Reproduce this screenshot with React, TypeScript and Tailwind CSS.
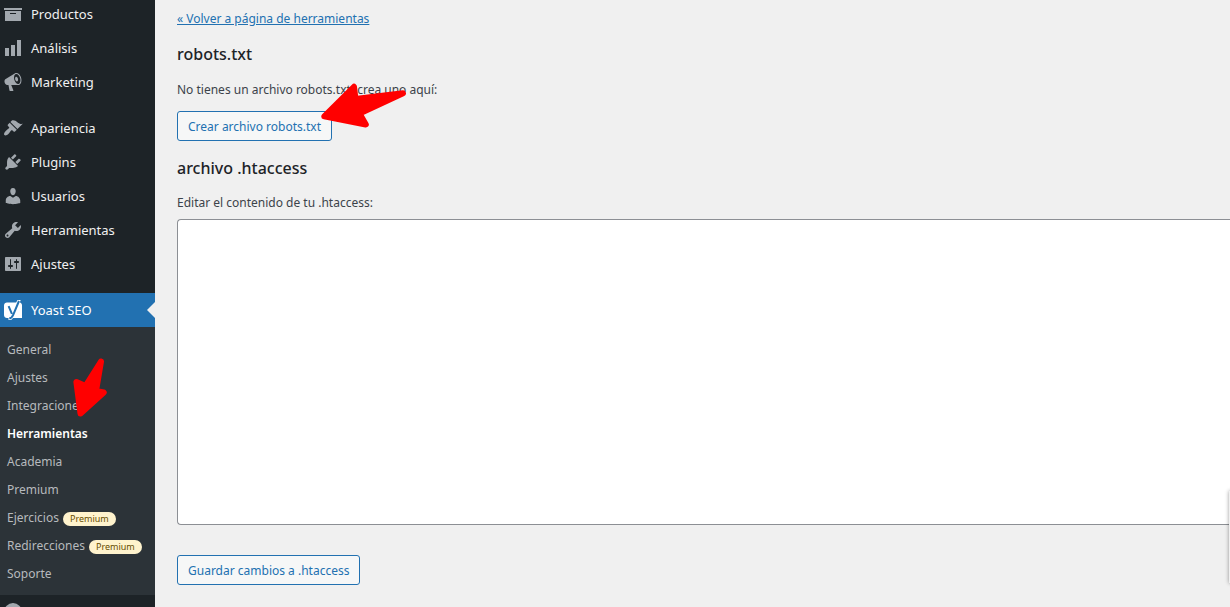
import { useState } from "react";
import clsx from "clsx";

interface MenuEntry {
  label: string;
  icon: string;
}

const storeMenu: MenuEntry[] = [
  { label: "Productos", icon: "M19 4v2H1V4h18zM2 7h16v10H2V7zm11 3V9H7v1h6z" },
  { label: "Análisis", icon: "M18 18V2h-4v16h4zm-6 0V7H8v11h4zm-6 0v-8H2v8h4z" },
  {
    label: "Marketing",
    icon: "M18.15 5.94c.46 1.62.38 3.22-.02 4.48-.42 1.28-1.26 2.18-2.3 2.48-.16.06-.26.06-.4.06-.06.02-.12.02-.18.02-.06.02-.14.02-.22.02h-6.8l2.22 5.5c.02.14-.06.26-.14.34-.08.1-.24.16-.34.16H6.95c-.1 0-.26-.06-.34-.16-.08-.08-.16-.2-.14-.34l-1-5.5H4.25l-.02-.02c-.5.06-1.08-.18-1.54-.62s-.88-1.08-1.06-1.88c-.24-.8-.2-1.56-.02-2.2.18-.62.58-1.08 1.06-1.3l.02-.02 9-5.4c.1-.06.18-.1.24-.16.06-.04.14-.08.24-.12.16-.08.28-.12.5-.18 1.04-.3 2.24.1 3.22.98s1.84 2.24 2.26 3.86zm-2.58 5.98h-.02c.4-.1.74-.34 1.04-.7.58-.7.86-1.76.86-3.04 0-.64-.1-1.3-.28-1.98-.34-1.36-1.02-2.5-1.78-3.24s-1.68-1.1-2.46-.88c-.82.22-1.4.96-1.7 2-.32 1.04-.28 2.36.06 3.72.38 1.36 1 2.5 1.8 3.24.78.74 1.62 1.1 2.48.88zm-2.54-7.08c.22-.04.42-.02.62.04.38.16.76.48 1.02 1s.42 1.2.42 1.78c0 .3-.04.56-.12.8-.18.48-.44.84-.86.94-.34.1-.8-.06-1.14-.4s-.64-.86-.78-1.5c-.18-.62-.12-1.24.02-1.72s.48-.84.82-.94z",
  },
];

const adminMenu: MenuEntry[] = [
  {
    label: "Apariencia",
    icon: "M14.48 11.06L7.41 3.99l1.5-1.5c.5-.56 2.3-.47 3.51.32 1.21.8 1.43 1.28 2.91 2.1 1.18.64 2.45 1.26 4.45.85zm-.71.71L6.7 4.7 4.93 6.47c-.39.39-.39 1.02 0 1.41l1.06 1.06c.39.39.39 1.03 0 1.42-.6.6-1.43 1.11-2.21 1.69-.35.26-.7.53-1.01.84C1.43 14.23.4 16.08 1.4 17.07c.99 1 2.84-.03 4.18-1.36.31-.31.58-.66.85-1.02.57-.78 1.08-1.61 1.69-2.21.39-.39 1.02-.39 1.41 0l1.06 1.06c.39.39 1.02.39 1.41 0z",
  },
  {
    label: "Plugins",
    icon: "M13.11 4.36L9.87 7.6 8 5.73l3.24-3.24c.35-.34 1.05-.2 1.56.32.52.51.66 1.21.31 1.55zm-8 1.77l.91-1.12 9.01 9.01-1.19.84c-.71.71-2.63 1.16-3.82 1.16H6.14L4.9 17.26c-.59.59-1.54.59-2.12 0-.59-.58-.59-1.53 0-2.12l1.24-1.24v-3.88c0-1.13.4-3.19 1.09-3.89zm7.26 3.97l3.24-3.24c.34-.35 1.04-.21 1.55.31.52.51.66 1.21.31 1.55l-3.24 3.25z",
  },
  {
    label: "Usuarios",
    icon: "M10 9.25c-2.27 0-2.73-3.44-2.73-3.44C7 4.02 7.82 2 9.97 2c2.16 0 2.98 2.02 2.71 3.81 0 0-.41 3.44-2.68 3.44zm0 2.57L12.72 10c2.39 0 4.52 2.33 4.52 4.53v2.49s-3.65 1.13-7.24 1.13c-3.65 0-7.24-1.13-7.24-1.13v-2.49c0-2.25 1.94-4.48 4.47-4.48z",
  },
  {
    label: "Herramientas",
    icon: "M16.68 9.77c-1.34 1.34-3.3 1.67-4.95.99l-5.41 6.52c-.99.99-2.59.99-3.58 0s-.99-2.59 0-3.57l6.52-5.42c-.68-1.65-.35-3.61.99-4.95 1.28-1.28 3.12-1.62 4.72-1.06l-2.89 2.89 2.82 2.82 2.86-2.87c.53 1.58.18 3.39-1.08 4.65zM3.81 16.21c.4.39 1.04.39 1.43 0 .4-.4.4-1.04 0-1.43-.39-.4-1.03-.4-1.43 0-.39.39-.39 1.03 0 1.43z",
  },
  {
    label: "Ajustes",
    icon: "M18 16V4c0-.55-.45-1-1-1H3c-.55 0-1 .45-1 1v12c0 .55.45 1 1 1h14c.55 0 1-.45 1-1zM8 11h1c.55 0 1 .45 1 1s-.45 1-1 1H8v1.5c0 .28-.22.5-.5.5s-.5-.22-.5-.5V13H6c-.55 0-1-.45-1-1s.45-1 1-1h1V5.5c0-.28.22-.5.5-.5s.5.22.5.5V11zm5-2h-1c-.55 0-1-.45-1-1s.45-1 1-1h1V5.5c0-.28.22-.5.5-.5s.5.22.5.5V7h1c.55 0 1 .45 1 1s-.45 1-1 1h-1v5.5c0 .28-.22.5-.5.5s-.5-.22-.5-.5V9z",
  },
];

const yoastMenu = [
  { label: "General" },
  { label: "Ajustes" },
  { label: "Integraciones" },
  { label: "Herramientas", current: true },
  { label: "Academia" },
  { label: "Premium" },
  { label: "Ejercicios", premium: true },
  { label: "Redirecciones", premium: true },
  { label: "Soporte" },
];

function MenuList({ items }: { items: MenuEntry[] }) {
  return (
    <ul>
      {items.map((item) => (
        <li key={item.label}>
          <a
            href="#"
            className="flex h-[34px] items-center gap-2 pl-[3px] text-[13px] text-[#f0f0f1]"
          >
            <svg viewBox="0 0 20 20" className="size-5 shrink-0 fill-[#a2a8ae]" aria-hidden="true">
              <path d={item.icon} />
            </svg>
            {item.label}
          </a>
        </li>
      ))}
    </ul>
  );
}

function YoastIcon() {
  return (
    <svg viewBox="0 0 20 20" className="size-5 shrink-0 overflow-visible" aria-hidden="true">
      <path
        d="M4 2.500h9.200L14.500 0h3.200l-.9 2.600c1.300.3 2.200 1.300 2.200 2.600V18H10l-1.500 1.700-3 .3v-2H4c-1.600 0-3-1.300-3-3V5.500c0-1.700 1.400-3 3-3z"
        fill="#fff"
      />
      <path
        d="M5.600 6.200l3.300 7.600M16 1L10.200 14.800c-.8 2-1.900 3.200-3.900 3.500"
        fill="none"
        stroke="#2271b1"
        strokeWidth="2"
      />
    </svg>
  );
}

function PremiumBadge() {
  return (
    <span className="mt-px flex h-3.5 items-center rounded-full bg-[#fff3cd] px-[7px] text-[9px] text-[#674e00]">
      Premium
    </span>
  );
}

function Sidebar() {
  return (
    <nav aria-label="Menú principal" className="relative w-[155px] shrink-0 bg-[#1d2327]">
      <div className="-mt-[3px] flex flex-col gap-3">
        <MenuList items={storeMenu} />
        <MenuList items={adminMenu} />
        <div>
          <a
            href="#"
            className="relative flex h-[34px] items-center gap-2 bg-[#2271b1] pl-[3px] text-[13px] text-white"
          >
            <YoastIcon />
            Yoast SEO
            <span className="absolute right-0 top-[9px] border-y-8 border-r-8 border-y-transparent border-r-[#f0f0f0]" />
          </a>
          <ul className="bg-[#2c3338] pb-[7px] pt-[9px]">
            {yoastMenu.map((item) => (
              <li key={item.label}>
                <a
                  href="#"
                  className={clsx(
                    "flex h-7 items-center gap-1 pl-[7px] text-xs",
                    item.current ? "font-semibold text-white" : "text-[#b7babd] hover:text-[#72aee6]"
                  )}
                >
                  {item.label}
                  {item.premium && <PremiumBadge />}
                </a>
              </li>
            ))}
          </ul>
          <div className="pl-[3px] pt-[7px]">
            <svg viewBox="0 0 20 20" className="size-5" aria-hidden="true">
              <circle cx="10" cy="10" r="7" fill="none" stroke="#a2a8ae" strokeWidth="4" />
            </svg>
          </div>
        </div>
      </div>
      <svg viewBox="0 0 34 60" className="absolute left-[73px] top-[357px] w-[34px]" aria-hidden="true">
        <path
          d="M28 4.500L12.500 29 3.400 25 7.500 56.500 30.700 35.500 23 34z"
          fill="red"
          stroke="red"
          strokeWidth="6"
          strokeLinejoin="round"
        />
      </svg>
    </nav>
  );
}

function SectionTitle({ children }: { children: React.ReactNode }) {
  return <h2 className="text-base/5 font-medium text-[#1d2327]">{children}</h2>;
}

function ActionButton({ children }: { children: React.ReactNode }) {
  return (
    <button
      type="button"
      className="flex h-[30px] items-center rounded-[3px] border border-[#2271b1] bg-[#f6f7f7] px-2.5 pt-0.5 text-xs text-[#2271b1] hover:bg-[#f0f0f1]"
    >
      {children}
    </button>
  );
}

export default function App() {
  const [htaccess, setHtaccess] = useState("");

  return (
    <div className="relative flex h-screen overflow-hidden bg-[#f0f0f0] font-['Segoe_UI','Noto_Sans',sans-serif] text-xs/5 text-[#3c434a]">
      <Sidebar />
      <main className="flex min-w-0 flex-1 flex-col items-start pl-[22px] pt-[9px]">
        <a href="#" className="mb-[15px] text-[#2271b1] underline">
          « Volver a página de herramientas
        </a>
        <SectionTitle>robots.txt</SectionTitle>
        <p className="mt-4">No tienes un archivo robots.txt, crea uno aquí:</p>
        <div className="relative mb-[17px] mt-[11px]">
          <ActionButton>Crear archivo robots.txt</ActionButton>
          <svg viewBox="0 0 88 48" className="absolute -top-7 left-[142px] w-[88px]" aria-hidden="true">
            <path
              d="M5.300 33.300L35 3.800 36.500 16 84 10.300 40.500 30.500 46.800 41.500z"
              fill="red"
              stroke="red"
              strokeWidth="6"
              strokeLinejoin="round"
            />
          </svg>
        </div>
        <SectionTitle>archivo .htaccess</SectionTitle>
        <label htmlFor="htaccess" className="mt-[15px]">
          Editar el contenido de tu .htaccess:
        </label>
        <textarea
          id="htaccess"
          rows={15}
          value={htaccess}
          onChange={(e) => setHtaccess(e.target.value)}
          className="mt-1.5 w-full resize-none rounded-l border border-r-0 border-[#8c8f94] bg-white px-1.5 py-0.5 font-mono outline-none"
        />
        <div className="mt-[30px]">
          <ActionButton>Guardar cambios a .htaccess</ActionButton>
        </div>
      </main>
      {/* edge of the collapsed panel */}
      <div className="absolute bottom-6 left-full -ml-px h-[92px] w-10 bg-[#f0f0f0] shadow-[0_0_4px_rgba(0,0,0,0.4)]" />
    </div>
  );
}
